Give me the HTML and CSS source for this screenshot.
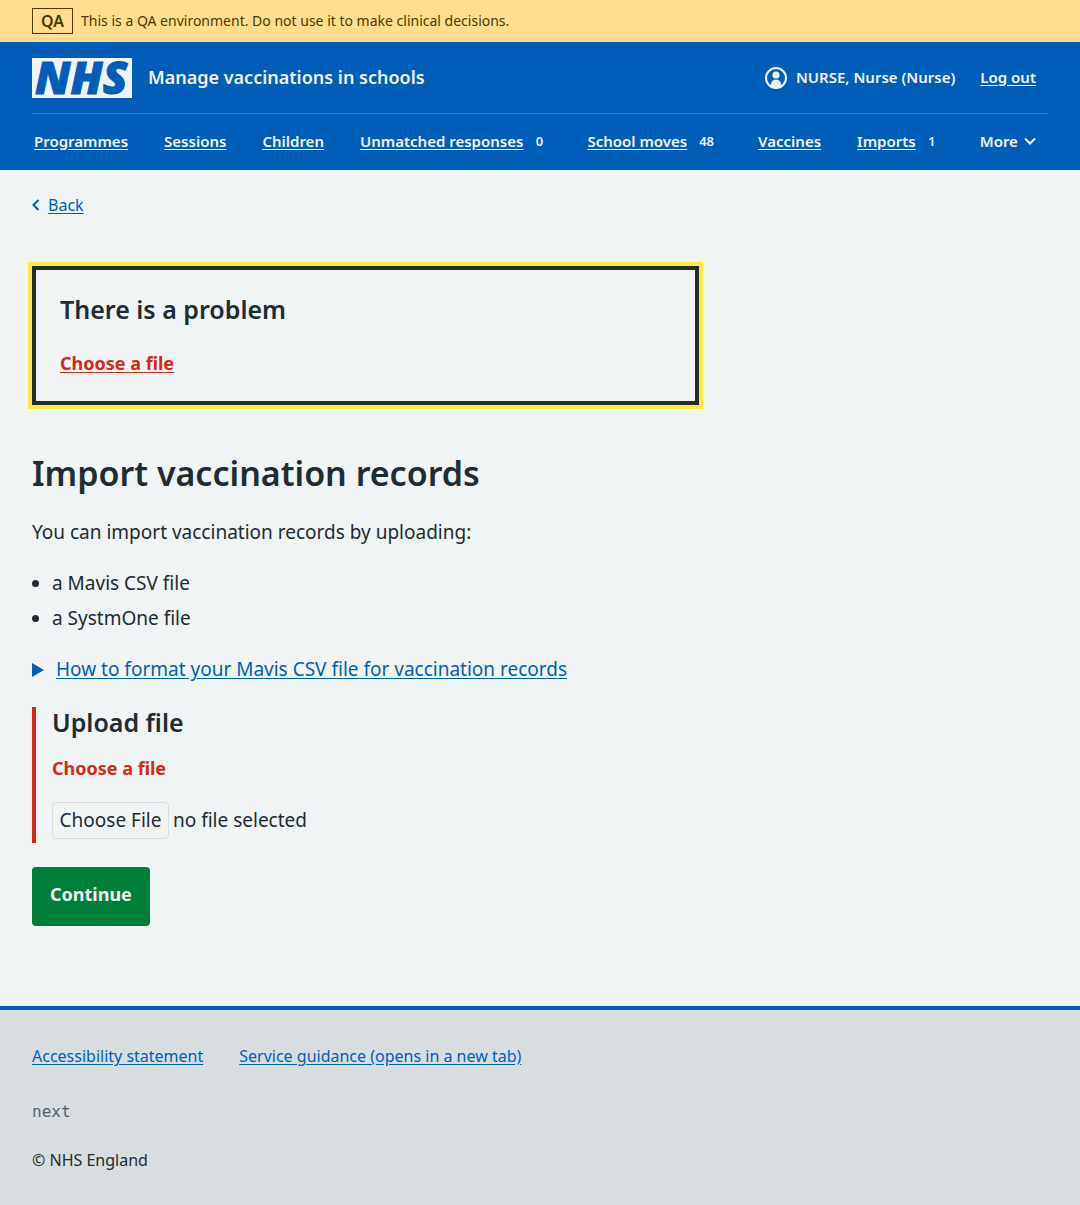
FILE: index.html
```html
<!DOCTYPE html>
<html lang="en">
<head>
  <meta charset="utf-8">
  <meta name="viewport" content="width=device-width, initial-scale=1">
  <title>Import vaccination records - Manage vaccinations in schools</title>
  <link rel="stylesheet" href="styles.css">
</head>
<body>
  <div class="environment">
    <strong class="environment-tag">QA</strong>
    <span>This is a QA environment. Do not use it to make clinical decisions.</span>
  </div>

  <header class="header">
    <div class="header-top">
      <a class="service" href="#">
        <svg class="logo" viewBox="0 0 100 40" width="100" height="40" role="img" aria-label="NHS">
          <rect class="logo-box" width="100" height="40"/>
          <text class="logo-text" x="3" y="36">NHS</text>
        </svg>
        <span class="service-name">Manage vaccinations in schools</span>
      </a>
      <div class="account">
        <svg class="account-icon" viewBox="0 0 24 24" width="24" height="24" aria-hidden="true">
          <circle cx="12" cy="12" r="10" fill="none" stroke="currentColor" stroke-width="2"/>
          <circle cx="12" cy="9" r="3.6" fill="currentColor"/>
          <path fill="currentColor" d="M6.800 20v-1.600a5.200 4.800 0 0 1 10.400 0V20A10 10 0 0 1 6.800 20z"/>
        </svg>
        <span class="account-name">NURSE, Nurse (Nurse)</span>
        <a class="logout" href="#">Log out</a>
      </div>
    </div>
    <nav aria-label="Menu">
      <ul class="nav">
        <li><a href="#">Programmes</a></li>
        <li><a href="#">Sessions</a></li>
        <li><a href="#">Children</a></li>
        <li><a href="#">Unmatched responses</a><span class="count">0</span></li>
        <li><a href="#">School moves</a><span class="count">48</span></li>
        <li><a href="#">Vaccines</a></li>
        <li><a href="#">Imports</a><span class="count">1</span></li>
        <li>
          <button class="more" type="button">More
            <svg viewBox="0 0 12 8" width="12" height="8" aria-hidden="true"><path d="M1 1.500l5 5 5-5" fill="none" stroke="currentColor" stroke-width="2"/></svg>
          </button>
        </li>
      </ul>
    </nav>
  </header>

  <main class="main">
    <div class="back">
      <svg viewBox="0 0 8 12" width="8" height="12" aria-hidden="true"><path d="M6.500 1l-5 5 5 5" fill="none" stroke="currentColor" stroke-width="2"/></svg>
      <a href="#">Back</a>
    </div>

    <div class="column">
      <div class="error-summary" role="alert">
        <h2 class="heading-m">There is a problem</h2>
        <a href="#file">Choose a file</a>
      </div>

      <h1>Import vaccination records</h1>
      <p>You can import vaccination records by uploading:</p>
      <ul class="bullets">
        <li>a Mavis CSV file</li>
        <li>a SystmOne file</li>
      </ul>

      <details class="details">
        <summary>
          <svg viewBox="0 0 12 14" width="12" height="14" aria-hidden="true"><path d="M0 0l12 7-12 7z" fill="currentColor"/></svg>
          <span>How to format your Mavis CSV file for vaccination records</span>
        </summary>
      </details>

      <form>
        <div class="field">
          <h2 class="heading-m"><label for="file">Upload file</label></h2>
          <p class="error" id="file-error">Choose a file</p>
          <div class="upload">
            <input id="file" type="file" aria-describedby="file-error">
            <span>no file selected</span>
          </div>
        </div>
        <button class="button" type="button">Continue</button>
      </form>
    </div>
  </main>

  <footer class="footer">
    <ul class="footer-links">
      <li><a href="#">Accessibility statement</a></li>
      <li><a href="#">Service guidance (opens in a new tab)</a></li>
    </ul>
    <p class="version">next</p>
    <p>© NHS England</p>
  </footer>
</body>
</html>
```
FILE: styles.css
```css
* {
  box-sizing: border-box;
}

body {
  display: flex;
  flex-direction: column;
  min-height: 100vh;
  margin: 0;
  background: #f0f4f5;
  color: #212b32;
  font: 400 19px/27px "Noto Sans", sans-serif;
}

h1, h2, p, ul {
  margin: 0;
  padding: 0;
}

a {
  color: #005eb8;
  text-underline-offset: 2px;
}

.environment {
  display: flex;
  align-items: center;
  gap: 8px;
  padding: 8px 32px;
  background: #ffdc8e;
  color: #4d3800;
  font-size: 14px;
  line-height: 24px;
}

.environment-tag {
  padding: 0 8px;
  border: 1px solid #4d3800;
  font-size: 16px;
  font-weight: 600;
}

.header {
  padding: 0 32px;
  background: #005eb8;
  color: #f0f4f5;
  font-size: 15px;
  font-weight: 600;
  line-height: 22px;
}

.header a {
  color: inherit;
}

.header-top {
  display: flex;
  align-items: center;
  justify-content: space-between;
  padding: 16px 12px 15px 0;
  border-bottom: 1px solid #337ec6;
}

.service {
  display: flex;
  align-items: center;
  gap: 16px;
  text-decoration: none;
}

.logo {
  overflow: visible;
}

.logo-box {
  fill: #f0f4f5;
}

.logo-text {
  fill: #005eb8;
  stroke: #005eb8;
  stroke-width: 1px;
  font: italic 800 45px "Open Sans", sans-serif;
}

.service-name {
  padding-bottom: 2px;
  font-size: 18px;
}

.account {
  display: flex;
  align-items: center;
}

.account-name,
.logout {
  padding-bottom: 2px;
}

.account-name {
  margin: 0 25px 0 8px;
}

.nav {
  display: flex;
  align-items: center;
  justify-content: space-between;
  padding: 16px 12px 18px 2px;
  list-style: none;
}

.nav li {
  display: flex;
  align-items: center;
}

.count {
  min-width: 24px;
  margin-left: 4px;
  padding: 0 8px;
  font-size: 13px;
  text-align: center;
}

.more {
  display: flex;
  align-items: center;
  gap: 6px;
  padding: 0;
  border: 0;
  background: none;
  color: inherit;
  font: inherit;
}

.main {
  padding: 24px 32px 80px;
}

.back {
  display: flex;
  align-items: center;
  gap: 8px;
  margin-bottom: 50px;
  color: #005eb8;
  font-size: 16px;
  line-height: 22px;
}

.column {
  width: calc((100% + 32px) * 2 / 3 - 32px);
}

.heading-m {
  font-size: 25px;
  font-weight: 600;
  line-height: 30px;
}

.error-summary {
  margin-bottom: 48px;
  padding: 24px;
  border: 4px solid #212b32;
  outline: 4px solid #ffeb3b;
}

.error-summary .heading-m {
  margin-bottom: 26px;
}

.error-summary a,
.error {
  color: #d5281b;
  font-size: 18px;
  font-weight: 700;
}

.error-summary a {
  display: block;
}

h1 {
  margin-bottom: 26px;
  font-size: 34px;
  font-weight: 600;
  line-height: 40px;
}

.bullets {
  display: grid;
  gap: 8px;
  margin: 24px 0;
  padding-left: 20px;
}

.details {
  margin-bottom: 24px;
  color: #005eb8;
}

.details summary {
  display: flex;
  align-items: center;
  gap: 12px;
  text-decoration: underline;
  text-underline-offset: 2px;
}

.field {
  margin-bottom: 24px;
  padding-left: 16px;
  border-left: 4px solid #d5281b;
}

.error {
  margin: 18px 0 16px;
}

.upload {
  display: flex;
  align-items: center;
  gap: 4px;
  padding: 4px 0;
}

.upload input {
  width: 117px;
  height: 37px;
  overflow: hidden;
  font: inherit;
}

.upload input::file-selector-button {
  width: 100%;
  height: 37px;
  margin: 0;
  padding: 0;
  border: 1px solid #d8dde0;
  border-radius: 4px;
  background: transparent;
  color: #212b32;
  font: inherit;
}

.button {
  display: block;
  padding: 14px 18px 18px;
  border: 0;
  border-radius: 4px;
  background: #007f3b;
  color: #f0f4f5;
  font: inherit;
  font-size: 18px;
  font-weight: 700;
}

.footer {
  flex: 1;
  padding: 34px 32px 32px;
  border-top: 4px solid #005eb8;
  background: #d8dde0;
  font-size: 16px;
  line-height: 24px;
}

.footer-links {
  display: flex;
  gap: 36px;
  margin-bottom: 32px;
  list-style: none;
}

.version {
  margin-bottom: 24px;
  color: #4c6272;
  font-family: "DejaVu Sans Mono", monospace;
}
```
